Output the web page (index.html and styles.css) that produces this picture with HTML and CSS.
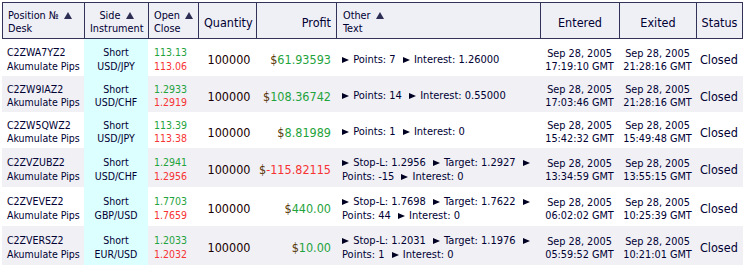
FILE: index.html
```html
<!DOCTYPE html>
<html>
<head>
<meta charset="utf-8">
<link rel="stylesheet" href="styles.css">
</head>
<body>
<table class="grid">
  <colgroup>
    <col class="c-pos"><col class="c-side"><col class="c-open"><col class="c-qty"><col class="c-profit"><col class="c-other"><col class="c-ent"><col class="c-exit"><col class="c-status">
  </colgroup>
  <thead>
    <tr class="head">
      <th class="sm left">Position № <span class="arrow"></span><br>Desk</th>
      <th class="sm center">Side <span class="arrow"></span><br>Instrument</th>
      <th class="sm left">Open <span class="arrow"></span><br>Close</th>
      <th class="lg center">Quantity</th>
      <th class="lg right">Profit</th>
      <th class="sm left other-h">Other <span class="arrow"></span><br>Text</th>
      <th class="lg center">Entered</th>
      <th class="lg center">Exited</th>
      <th class="lg center last">Status</th>
    </tr>
  </thead>
  <tbody>
    <tr class="r37">
      <td class="pos">C2ZWA7YZ2<br>Akumulate Pips</td>
      <td class="side">Short<br>USD/JPY</td>
      <td class="oc"><span class="up">113.13</span><br><span class="dn">113.06</span></td>
      <td class="qty">100000</td>
      <td class="profit"><span class="cur">$</span><span class="up">61.93593</span></td>
      <td class="other"><span class="tri first"></span> Points: 7 <span class="tri"></span> Interest: 1.26000</td>
      <td class="date">Sep 28, 2005<br>17:19:10 GMT</td>
      <td class="date">Sep 28, 2005<br>21:28:16 GMT</td>
      <td class="status">Closed</td>
    </tr>
    <tr class="r36 alt">
      <td class="pos">C2ZW9IAZ2<br>Akumulate Pips</td>
      <td class="side">Short<br>USD/CHF</td>
      <td class="oc"><span class="up">1.2933</span><br><span class="dn">1.2919</span></td>
      <td class="qty">100000</td>
      <td class="profit"><span class="cur">$</span><span class="up">108.36742</span></td>
      <td class="other"><span class="tri first"></span> Points: 14 <span class="tri"></span> Interest: 0.55000</td>
      <td class="date">Sep 28, 2005<br>17:03:46 GMT</td>
      <td class="date">Sep 28, 2005<br>21:28:16 GMT</td>
      <td class="status">Closed</td>
    </tr>
    <tr class="r36">
      <td class="pos">C2ZW5QWZ2<br>Akumulate Pips</td>
      <td class="side">Short<br>USD/JPY</td>
      <td class="oc"><span class="up">113.39</span><br><span class="dn">113.38</span></td>
      <td class="qty">100000</td>
      <td class="profit"><span class="cur">$</span><span class="up">8.81989</span></td>
      <td class="other"><span class="tri first"></span> Points: 1 <span class="tri"></span> Interest: 0</td>
      <td class="date">Sep 28, 2005<br>15:42:32 GMT</td>
      <td class="date">Sep 28, 2005<br>15:49:48 GMT</td>
      <td class="status">Closed</td>
    </tr>
    <tr class="r39 alt">
      <td class="pos">C2ZVZUBZ2<br>Akumulate Pips</td>
      <td class="side">Short<br>USD/CHF</td>
      <td class="oc"><span class="up">1.2941</span><br><span class="dn">1.2956</span></td>
      <td class="qty">100000</td>
      <td class="profit"><span class="cur">$</span><span class="dn">-115.82115</span></td>
      <td class="other"><span class="tri first"></span> Stop-L: 1.2956 <span class="tri"></span> Target: 1.2927 <span class="tri"></span><br>Points: -15 <span class="tri"></span> Interest: 0</td>
      <td class="date">Sep 28, 2005<br>13:34:59 GMT</td>
      <td class="date">Sep 28, 2005<br>13:55:15 GMT</td>
      <td class="status">Closed</td>
    </tr>
    <tr class="r39">
      <td class="pos">C2ZVEVEZ2<br>Akumulate Pips</td>
      <td class="side">Short<br>GBP/USD</td>
      <td class="oc"><span class="up">1.7703</span><br><span class="dn">1.7659</span></td>
      <td class="qty">100000</td>
      <td class="profit"><span class="cur">$</span><span class="up">440.00</span></td>
      <td class="other"><span class="tri first"></span> Stop-L: 1.7698 <span class="tri"></span> Target: 1.7622 <span class="tri"></span><br>Points: 44 <span class="tri"></span> Interest: 0</td>
      <td class="date">Sep 28, 2005<br>06:02:02 GMT</td>
      <td class="date">Sep 28, 2005<br>10:25:39 GMT</td>
      <td class="status">Closed</td>
    </tr>
    <tr class="r39 alt">
      <td class="pos">C2ZVERSZ2<br>Akumulate Pips</td>
      <td class="side">Short<br>EUR/USD</td>
      <td class="oc"><span class="up">1.2033</span><br><span class="dn">1.2032</span></td>
      <td class="qty">100000</td>
      <td class="profit"><span class="cur">$</span><span class="up">10.00</span></td>
      <td class="other"><span class="tri first"></span> Stop-L: 1.2031 <span class="tri"></span> Target: 1.1976 <span class="tri"></span><br>Points: 1 <span class="tri"></span> Interest: 0</td>
      <td class="date">Sep 28, 2005<br>05:59:52 GMT</td>
      <td class="date">Sep 28, 2005<br>10:21:01 GMT</td>
      <td class="status">Closed</td>
    </tr>
  </tbody>
</table>
</body>
</html>
```
FILE: styles.css
```css
html, body {
  margin: 0;
  padding: 0;
  background: #ffffff;
}
body {
  padding: 2px 0 0 2px;
  font-family: "DejaVu Sans Condensed", "DejaVu Sans", sans-serif;
  font-stretch: condensed;
  color: #000033;
}
.grid {
  border-collapse: separate;
  border-spacing: 0;
  table-layout: fixed;
  width: 741px;
}
.c-pos { width: 82px; }
.c-side { width: 64px; }
.c-open { width: 50px; }
.c-qty { width: 58px; }
.c-profit { width: 80px; }
.c-other { width: 204px; }
.c-ent { width: 79px; }
.c-exit { width: 77px; }
.c-status { width: 47px; }

.head { height: 37px; }
.head th {
  background: #efeff6;
  border-top: 1px solid #33335a;
  border-bottom: 1px solid #33335a;
  border-left: 1px solid #33335a;
  padding: 3px 5px 0 5px;
  font-weight: normal;
  color: #000033;
  vertical-align: middle;
  white-space: nowrap;
}
.head th.sm { padding-top: 4px; }
.head th.last { border-right: 1px solid #33335a; padding-left: 2px; padding-right: 2px; }
.head th.other-h { padding-left: 6px; }
.sm { font-size: 10.8px; line-height: 12.5px; }
.lg { font-size: 12.5px; }
.left { text-align: left; }
.center { text-align: center; }
.right { text-align: right; }
.arrow {
  display: inline-block;
  width: 0;
  height: 0;
  margin-left: 2px;
  border-left: 4px solid transparent;
  border-right: 4px solid transparent;
  border-bottom: 7px solid #2e2e55;
  vertical-align: 0;
}

tbody td {
  vertical-align: middle;
  padding: 4px 0 0 0;
  white-space: nowrap;
}
.r37 { height: 37px; }
.r36 { height: 36px; }
.r39 { height: 39px; }
.alt td { background: #f0f0f5; }

.pos { font-size: 10.5px; line-height: 13.5px; padding-left: 5px; }
tbody td.side {
  background: #dcffff;
  font-size: 10.5px;
  line-height: 13.5px;
  text-align: center;
}
.oc { font-size: 10.5px; line-height: 13.5px; padding-left: 6px; }
.up { color: #1fa33c; }
.dn { color: #f73333; }
tbody td.qty { font-size: 12.5px; text-align: center; color: #1a0000; padding-left: 4px; }
tbody td.profit { font-size: 12.5px; text-align: right; padding-right: 5px; }
.cur { color: #553300; }
tbody td.other { font-size: 11px; line-height: 14px; padding-left: 6px; }
.tri {
  display: inline-block;
  width: 0;
  height: 0;
  margin: 0 1px 0 4px;
  border-top: 3.5px solid transparent;
  border-bottom: 3.5px solid transparent;
  border-left: 7px solid #000022;
  vertical-align: 0;
}
.tri.first { margin-left: 0; }
.date { font-size: 10.8px; line-height: 13px; text-align: center; }
tbody td.status { font-size: 12.5px; padding-left: 4px; }
```
